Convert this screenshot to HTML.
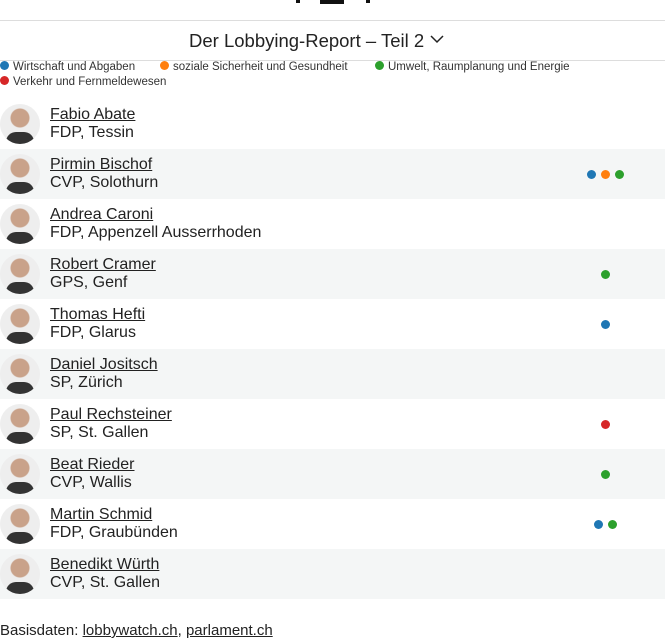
<!DOCTYPE html>
<html><head><meta charset="utf-8"><style>
body{margin:0;width:665px;height:640px;background:#fff;font-family:"Liberation Sans",sans-serif;color:#222;position:relative;overflow:hidden}
.hr{position:absolute;left:0;width:665px;height:1px;background:#ddd}
.title{position:absolute;top:30px;left:189px;font-size:18.5px;color:#222;white-space:nowrap}
.leg{position:absolute;font-size:11.5px;color:#333;white-space:nowrap}
.d{display:inline-block;width:9px;height:9px;border-radius:50%;vertical-align:0px;margin-right:4px}
.b{background:#1f77b4}.o{background:#ff7f0e}.g{background:#2ca02c}.r{background:#d62728}
.row{position:absolute;left:0;width:665px;height:50px}
.row.alt{background:#f4f6f6}
.av{position:absolute;left:0;top:5px;width:40px;height:40px;border-radius:50%;background:radial-gradient(circle at 50% 35%,#c9a28a 0 9px,#eee 10px);overflow:hidden}
.av:after{content:"";position:absolute;left:6px;top:28px;width:28px;height:16px;border-radius:10px 10px 0 0;background:#333}
.nm{position:absolute;left:50px;top:7px;font-size:16px;line-height:18px}
.dots{position:absolute;top:21px}
.dots .d{margin:0;position:absolute}
</style></head><body>
<div style="position:absolute;left:320px;top:0;width:24px;height:4px;background:#111"></div>
<div style="position:absolute;left:296px;top:0;width:4px;height:3px;background:#111"></div>
<div style="position:absolute;left:366px;top:0;width:4px;height:3px;background:#111"></div>
<div class="hr" style="top:20px"></div>
<div class="title">Der Lobbying-Report – Teil 2 <svg width="16" height="12" viewBox="0 0 16 12" style="vertical-align:2px"><path d="M2 3l6 6 6-6" stroke="#222" stroke-width="1.5" fill="none"/></svg></div>
<div class="hr" style="top:60px"></div>
<div class="leg" style="top:61px;left:0"><i class="d b"></i>Wirtschaft und Abgaben</div>
<div class="leg" style="top:61px;left:160px"><i class="d o"></i>soziale Sicherheit und Gesundheit</div>
<div class="leg" style="top:61px;left:375px"><i class="d g"></i>Umwelt, Raumplanung und Energie</div>
<div class="leg" style="top:76px;left:0"><i class="d r"></i>Verkehr und Fernmeldewesen</div>

<div class="row" style="top:99px"><div class="av"></div><div class="nm"><u>Fabio Abate</u><br>FDP, Tessin</div></div>
<div class="row alt" style="top:149px"><div class="av"></div><div class="nm"><u>Pirmin Bischof</u><br>CVP, Solothurn</div><div class="dots"><i class="d b" style="left:587px"></i><i class="d o" style="left:601px"></i><i class="d g" style="left:615px"></i></div></div>
<div class="row" style="top:199px"><div class="av"></div><div class="nm"><u>Andrea Caroni</u><br>FDP, Appenzell Ausserrhoden</div></div>
<div class="row alt" style="top:249px"><div class="av"></div><div class="nm"><u>Robert Cramer</u><br>GPS, Genf</div><div class="dots"><i class="d g" style="left:601px"></i></div></div>
<div class="row" style="top:299px"><div class="av"></div><div class="nm"><u>Thomas Hefti</u><br>FDP, Glarus</div><div class="dots"><i class="d b" style="left:601px"></i></div></div>
<div class="row alt" style="top:349px"><div class="av"></div><div class="nm"><u>Daniel Jositsch</u><br>SP, Zürich</div></div>
<div class="row" style="top:399px"><div class="av"></div><div class="nm"><u>Paul Rechsteiner</u><br>SP, St. Gallen</div><div class="dots"><i class="d r" style="left:601px"></i></div></div>
<div class="row alt" style="top:449px"><div class="av"></div><div class="nm"><u>Beat Rieder</u><br>CVP, Wallis</div><div class="dots"><i class="d g" style="left:601px"></i></div></div>
<div class="row" style="top:499px"><div class="av"></div><div class="nm"><u>Martin Schmid</u><br>FDP, Graubünden</div><div class="dots"><i class="d b" style="left:594px"></i><i class="d g" style="left:608px"></i></div></div>
<div class="row alt" style="top:549px"><div class="av"></div><div class="nm"><u>Benedikt Würth</u><br>CVP, St. Gallen</div></div>

<div style="position:absolute;left:0;top:622px;font-size:15px">Basisdaten: <u>lobbywatch.ch</u>, <u>parlament.ch</u></div>
</body></html>
